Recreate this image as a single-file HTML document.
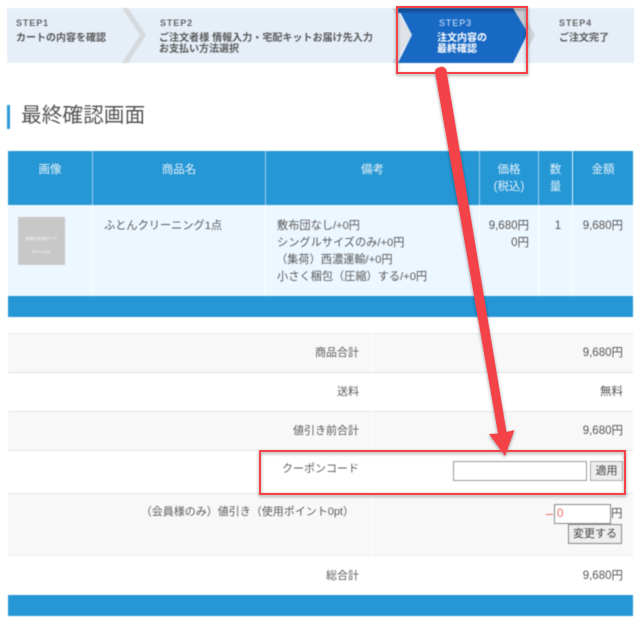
<!DOCTYPE html>
<html lang="ja"><head><meta charset="utf-8">
<style>
html,body{margin:0;padding:0;background:#fff}
body{width:640px;height:622px;overflow:hidden;position:relative;font-family:"Liberation Sans","Noto Sans CJK JP",sans-serif;color:#555;font-size:11.5px}
.a{position:absolute;white-space:nowrap}
.r{text-align:right}
.c{text-align:center}
.b{position:absolute}
.s{font-size:10px;font-weight:bold;color:#5a5a5a;line-height:11px}
.st{font-size:9px;font-weight:bold;letter-spacing:.9px;color:#666;line-height:11px}
.h{color:#e4f1fa;font-size:11.5px;line-height:17px}
.t{line-height:17px}
.l{font-size:11px;color:#5a5a5a}
</style></head><body>
<div id="w" style="position:absolute;left:0;top:0;width:640px;height:622px;filter:blur(.4px)">
<div class="b" style="left:7px;top:8px;width:627px;height:55px;background:#e6eef8"></div>
<svg class="b" style="left:0;top:0" width="640" height="80">
<polygon points="122,8 128,8 146,35 128,63 122,63 140,35" fill="#d6dade"/>
<polygon points="392,8 398,8 398,63 392,63 398,52 398,18" fill="#d6dade"/>
<polygon points="398,8 513,8 528,33 513,63 398,63 412,35" fill="#1769c3"/>
<polygon points="398,13 412,35 398,57" fill="#dfe2e6"/>
<polygon points="398,8 513,8 516,13 398,13" fill="#1559a8"/>
<polygon points="513,8 527,8 527,31" fill="#c6cad0"/>
<polygon points="527,20 535,35 527,50" fill="#cfd3d8"/>
</svg>
<div class="a st" style="left:16px;top:18px">STEP1</div>
<div class="a s" style="left:16px;top:33px">カートの内容を確認</div>
<div class="a st" style="left:160px;top:18px">STEP2</div>
<div class="a s" style="left:159px;top:33px;letter-spacing:.05px">ご注文者様 情報入力・宅配キットお届け先入力</div>
<div class="a s" style="left:159px;top:44px">お支払い方法選択</div>
<div class="a st" style="left:439px;top:18px;color:#d8e8f8;font-weight:normal">STEP3</div>
<div class="a s" style="left:437px;top:33px;color:#fff">注文内容の</div>
<div class="a s" style="left:437px;top:44px;color:#fff">最終確認</div>
<div class="a st" style="left:559px;top:18px">STEP4</div>
<div class="a s" style="left:559px;top:33px">ご注文完了</div>

<div class="b" style="left:7px;top:105px;width:3px;height:24px;background:#2a9ad6"></div>
<div class="a" style="left:21px;top:102px;font-size:20.7px;line-height:28px;color:#555">最終確認画面</div>

<div class="b" style="left:8px;top:151px;width:625px;height:54px;background:#2597d5"></div>
<div class="b" style="left:8px;top:205px;width:625px;height:91px;background:#edf7ff"></div>
<div class="b" style="left:8px;top:296px;width:625px;height:21px;background:#2597d5"></div>
<div class="b" style="left:92px;top:151px;width:1px;height:54px;background:#9fd0ec"></div>
<div class="b" style="left:265px;top:151px;width:1px;height:54px;background:#9fd0ec"></div>
<div class="b" style="left:479px;top:151px;width:1px;height:54px;background:#9fd0ec"></div>
<div class="b" style="left:538px;top:151px;width:1px;height:54px;background:#9fd0ec"></div>
<div class="b" style="left:572px;top:151px;width:1px;height:54px;background:#d8eefa"></div>
<div class="b" style="left:92px;top:205px;width:1px;height:91px;background:#fff"></div>
<div class="b" style="left:265px;top:205px;width:1px;height:91px;background:#fff"></div>
<div class="b" style="left:479px;top:205px;width:1px;height:91px;background:#fff"></div>
<div class="b" style="left:538px;top:205px;width:1px;height:91px;background:#fff"></div>
<div class="b" style="left:572px;top:205px;width:1px;height:91px;background:#fff"></div>

<div class="a c h" style="left:8px;width:84px;top:162px">画像</div>
<div class="a c h" style="left:93px;width:172px;top:162px">商品名</div>
<div class="a c h" style="left:266px;width:213px;top:162px">備考</div>
<div class="a c h" style="left:480px;width:58px;top:162px">価格<br>(税込)</div>
<div class="a c h" style="left:539px;width:33px;top:162px">数<br>量</div>
<div class="a c h" style="left:573px;width:60px;top:162px">金額</div>

<div class="b" style="left:18px;top:217px;width:47px;height:48px;background:#c8c8c8"></div>
<div class="a c" style="left:18px;width:47px;top:236px;font-size:4px;line-height:6px;color:#f0f0f0">画像の準備中です</div>
<div class="a c" style="left:18px;width:47px;top:249px;font-size:4.5px;line-height:6px;color:#eee">No Image</div>

<div class="a t l" style="left:104px;top:218px;font-size:11.2px">ふとんクリーニング1点</div>
<div class="a t l" style="left:277px;top:218px;font-size:11.2px">敷布団なし/+0円</div>
<div class="a t l" style="left:277px;top:235px;font-size:11.2px">シングルサイズのみ/+0円</div>
<div class="a t l" style="left:276px;top:252px;font-size:11.2px">（集荷）西濃運輸/+0円</div>
<div class="a t l" style="left:277px;top:269px;font-size:11.2px">小さく梱包（圧縮）する/+0円</div>
<div class="a t r" style="left:480px;width:49px;top:218px">9,680円</div>
<div class="a t r" style="left:480px;width:49px;top:235px">0円</div>
<div class="a t c" style="left:539px;width:38px;top:218px">1</div>
<div class="a t r" style="left:573px;width:50px;top:218px">9,680円</div>

<div class="b" style="left:8px;top:333px;width:625px;height:39px;background:#f8f8f8;border-top:1px solid #ececec;box-sizing:border-box"></div>
<div class="b" style="left:8px;top:372px;width:625px;height:1px;background:#e0e0e0"></div>
<div class="b" style="left:8px;top:411px;width:625px;height:39px;background:#f8f8f8;border-top:1px solid #e4e4e4;box-sizing:border-box"></div>
<div class="b" style="left:8px;top:450px;width:625px;height:1px;background:#e4e4e4"></div>
<div class="b" style="left:8px;top:493px;width:625px;height:63px;background:#f8f8f8;border-top:1px solid #e4e4e4;border-bottom:1px solid #ececec;box-sizing:border-box"></div>
<div class="b" style="left:371px;top:333px;width:1px;height:39px;background:#fff"></div>
<div class="b" style="left:371px;top:411px;width:1px;height:39px;background:#fff"></div>
<div class="b" style="left:371px;top:493px;width:1px;height:63px;background:#fff"></div>
<div class="b" style="left:8px;top:595px;width:625px;height:21px;background:#2597d5"></div>

<div class="a t r l" style="left:100px;width:259px;top:345px">商品合計</div>
<div class="a t r l" style="left:100px;width:259px;top:384px">送料</div>
<div class="a t r l" style="left:100px;width:259px;top:423px">値引き前合計</div>
<div class="a t r l" style="left:100px;width:259px;top:461px">クーポンコード</div>
<div class="a t r l" style="left:100px;width:254px;top:504px">（会員様のみ）値引き（使用ポイント0pt）</div>
<div class="a t r l" style="left:100px;width:259px;top:568px">総合計</div>
<div class="a t r" style="left:500px;width:123px;top:345px">9,680円</div>
<div class="a t r" style="left:500px;width:123px;top:384px">無料</div>
<div class="a t r" style="left:500px;width:123px;top:423px">9,680円</div>
<div class="a t r" style="left:500px;width:123px;top:568px">9,680円</div>

<div class="b" style="left:453px;top:461px;width:134px;height:20px;box-sizing:border-box;background:#fff;border:1px solid #999"></div>
<div class="a c" style="left:590px;top:461px;width:33px;height:20px;box-sizing:border-box;background:#eee;border:1px solid #aaa;line-height:18px;color:#444;font-size:11px">適用</div>
<div class="b" style="left:546px;top:514px;width:7px;height:1px;background:#f26a5e"></div>
<div class="b" style="left:554px;top:504px;width:57px;height:20px;box-sizing:border-box;background:#fff;border:1px solid #888"></div>
<div class="a" style="left:557px;top:506px;color:#f26a5e;line-height:17px">0</div>
<div class="a" style="left:611px;top:506px;line-height:17px">円</div>
<div class="a c" style="left:568px;top:524px;width:54px;height:20px;box-sizing:border-box;background:#eee;border:1px solid #888;line-height:18px;color:#444;font-size:11px">変更する</div>
</div>

<svg class="b" style="left:0;top:0;overflow:visible" width="640" height="622">
<defs><filter id="sh" x="-10%" y="-10%" width="120%" height="120%"><feDropShadow dx="0" dy="1.5" stdDeviation="1.5" flood-color="#000" flood-opacity=".4"/></filter></defs>
<g filter="url(#sh)">
<rect x="397" y="7" width="130" height="66" fill="none" stroke="#f4424a" stroke-width="2"/>
<rect x="260" y="451" width="365" height="43" fill="none" stroke="#f4424a" stroke-width="2"/>
<path d="M440 67 Q443 66 445 68 Q446.500 69 446.500 71 L506.500 432 L514.500 430 L505 456 L489 434 L498 433.500 L435 72 Q435 68 440 67 Z" fill="#f4424a"/>
</g>
</svg>
</body></html>
